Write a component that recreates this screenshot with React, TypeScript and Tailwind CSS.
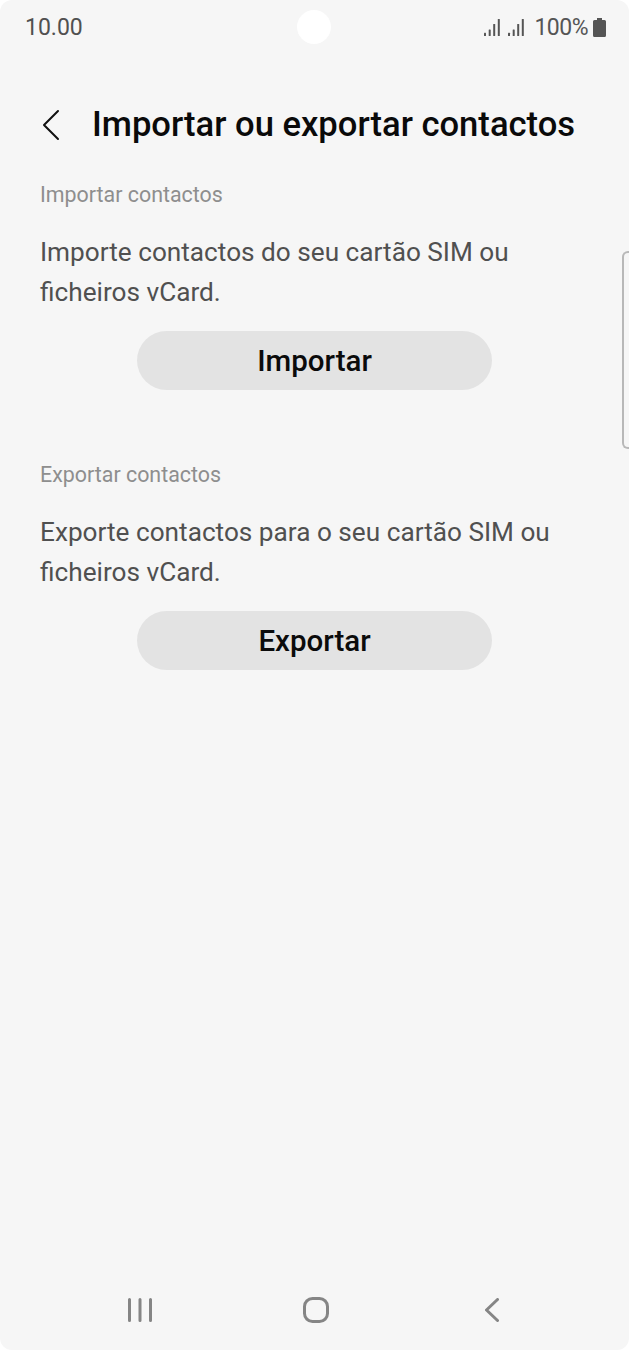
import "react";

function Signal() {
  return (
    <svg width="16" height="17" viewBox="0 0 16 17" fill="#555555">
      <rect x="0" y="13.700" width="2" height="3.300" rx="0.500" />
      <rect x="4.700" y="10.400" width="2" height="6.600" rx="0.500" />
      <rect x="9.200" y="5" width="2" height="12" rx="0.500" />
      <rect x="13.800" y="0" width="2" height="17" rx="0.500" />
    </svg>
  );
}

function Section(props: { label: string; text: string; action: string }) {
  return (
    <section className="px-10">
      <h2 className="text-[21.400px] leading-7 text-[#8e8e8e]">{props.label}</h2>
      <p className="mt-[23px] text-[26.200px] leading-10 text-[#505050]">{props.text}</p>
      <button className="mx-auto mt-[19px] block h-[59px] w-[355px] rounded-full bg-[#e3e3e3] pt-[2px] text-[29.500px] font-medium text-[#0b0b0b]">
        {props.action}
      </button>
    </section>
  );
}

export default function App() {
  return (
    <div className="relative flex h-[1350px] w-[629px] flex-col overflow-hidden rounded-[12px] bg-[#f6f6f6] font-['Roboto',sans-serif]">
      {/* Status bar */}
      <div className="flex h-[55px] items-center justify-between pl-[25px] pr-[23px]">
        <span className="pt-[2px] text-[23px] text-[#505050]">10.00</span>
        <div className="flex items-center text-[#555555]">
          <Signal />
          <span className="ml-[8px]"><Signal /></span>
          <span className="ml-[10px] pt-[2px] text-[23px] tracking-[-0.500px]">100%</span>
          <svg className="ml-[5px]" width="13" height="19" viewBox="0 0 13 19" fill="#555555">
            <path d="M4 0h5v2h2.500A1.500 1.500 0 0 1 13 3.500V17.500a1.500 1.500 0 0 1-1.500 1.500h-10A1.500 1.500 0 0 1 0 17.500V3.500A1.500 1.500 0 0 1 1.500 2H4z" />
          </svg>
        </div>
      </div>

      {/* Camera cutout */}
      <div className="absolute left-[297px] top-[10px] h-[34px] w-[34px] rounded-full bg-white" />

      {/* Title */}
      <header className="mt-[45px] flex h-[50px] items-center">
        <svg className="ml-[42px]" width="18" height="32" viewBox="0 0 18 32" fill="none" stroke="#111111" strokeWidth="2" strokeLinecap="round" strokeLinejoin="round">
          <path d="M16 2 2 16l14 14" />
        </svg>
        <h1 className="ml-[32px] text-[34.600px] font-medium text-[#0a0a0a]">Importar ou exportar contactos</h1>
      </header>

      <div className="mt-[31px] flex flex-col gap-[71px]">
        <Section label="Importar contactos" text="Importe contactos do seu cartão SIM ou ficheiros vCard." action="Importar" />
        <Section label="Exportar contactos" text="Exporte contactos para o seu cartão SIM ou ficheiros vCard." action="Exportar" />
      </div>

      {/* Edge panel handle */}
      <div className="absolute right-0 top-[251px] h-[198px] w-[7px] rounded-l-[6px] border-y-2 border-l-2 border-[#b8b8b8]" />

      {/* Nav bar */}
      <nav className="mt-auto mb-[27px] flex h-[26px] items-center pl-[128px]">
        <svg width="24" height="24" viewBox="0 0 24 24" fill="none" stroke="#858585" strokeWidth="3" strokeLinecap="round">
          <path d="M1.500 1.500v21M12 1.500v21M22.500 1.500v21" />
        </svg>
        <svg className="ml-[151px]" width="26" height="26" viewBox="0 0 26 26" fill="none" stroke="#858585" strokeWidth="3">
          <rect x="1.500" y="1.500" width="23" height="23" rx="8" />
        </svg>
        <svg className="ml-[156px]" width="14" height="24" viewBox="0 0 14 24" fill="none" stroke="#858585" strokeWidth="3" strokeLinecap="round" strokeLinejoin="round">
          <path d="M12.500 1.500 1.500 12l11 10.500" />
        </svg>
      </nav>
    </div>
  );
}
